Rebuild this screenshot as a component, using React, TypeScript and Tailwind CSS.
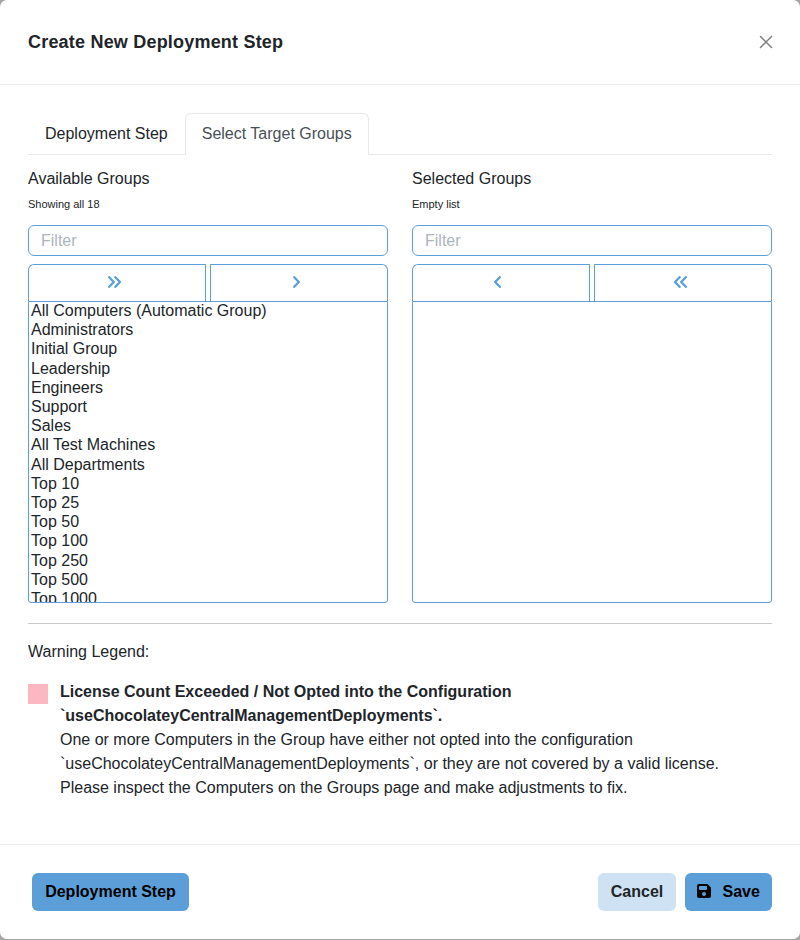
import { FaFloppyDisk } from "react-icons/fa6";

const groups = [
  "All Computers (Automatic Group)",
  "Administrators",
  "Initial Group",
  "Leadership",
  "Engineers",
  "Support",
  "Sales",
  "All Test Machines",
  "All Departments",
  "Top 10",
  "Top 25",
  "Top 50",
  "Top 100",
  "Top 250",
  "Top 500",
  "Top 1000",
];

function Chevron({ double = false, left = false }: { double?: boolean; left?: boolean }) {
  return (
    <svg
      className={`${double ? "w-3.5" : "w-[7px]"} ${left ? "-scale-x-100" : ""} h-3`}
      viewBox={double ? "0 0 14 12" : "0 0 7 12"}
      fill="none"
      stroke="currentColor"
      strokeWidth="2.3"
      strokeLinecap="round"
      strokeLinejoin="round"
    >
      <path d="M1.2 1.2L5.8 6L1.2 10.8" />
      {double && <path d="M7.4 1.2L12 6L7.4 10.8" />}
    </svg>
  );
}

type GroupListProps = {
  title: string;
  info: string;
  items: string[];
  selected?: boolean;
};

function GroupList({ title, info, items, selected = false }: GroupListProps) {
  return (
    <section className="flex w-[360px] flex-col">
      <label className="leading-6">{title}</label>
      <span className="mt-[5px] text-[11px] leading-4">{info}</span>
      <input
        placeholder="Filter"
        className="mt-[13px] h-[31px] rounded-md border border-[#5c9fd8] px-3 leading-5 outline-none placeholder:text-[#adb5bd]"
      />
      <div className="mt-2 grid h-[37px] grid-cols-2 gap-1 text-[#5c9fd8]">
        <button
          className={`flex items-center justify-center rounded-tl-md border border-b-0 border-[#5c9fd8] pb-0.5 ${selected ? "pr-[7px]" : "pr-1"}`}
        >
          <Chevron double={!selected} left={selected} />
        </button>
        <button
          className={`flex items-center justify-center rounded-tr-md border border-b-0 border-[#5c9fd8] pb-0.5 ${selected ? "pr-1.5" : "pr-[5px]"}`}
        >
          <Chevron double={selected} left={selected} />
        </button>
      </div>
      <ul className="h-[302px] overflow-hidden rounded-b-[3px] border border-[#5c9fd8] px-0.5 leading-[19.2px] text-[#212529]">
        {items.map((item) => (
          <li key={item} className="first:-mt-px">{item}</li>
        ))}
      </ul>
    </section>
  );
}

export default function App() {
  return (
    <div className="h-[940px] w-[800px] bg-[#a6a6a6] font-['Liberation_Sans',Arial,sans-serif] text-base text-[#212529]">
      <div className="flex h-[939px] flex-col rounded-[7px] bg-white">
        <header className="flex h-[85px] items-center justify-between border-b border-[#e9ecef] pl-7 pr-[27px]">
          <h5 className="text-[18px] font-bold leading-6 tracking-[0.2px]">Create New Deployment Step</h5>
          <button aria-label="Close">
            <svg className="size-3.5" viewBox="0 0 14 14" fill="none" stroke="#7f7f7f" strokeWidth="1.5" strokeLinecap="round">
              <path d="M1.5 1.5l11 11M12.5 1.5l-11 11" />
            </svg>
          </button>
        </header>
        <main className="flex-1 px-7 pt-7">
          <nav className="flex h-[42px] border-b border-[#e6e8ea]">
            <button className="h-[41px] border border-transparent px-4 leading-6">Deployment Step</button>
            <button className="h-[42px] rounded-t-md border border-[#e6e8ea] border-b-white bg-white px-4 pb-px leading-6 text-[#495057]">
              Select Target Groups
            </button>
          </nav>
          <div className="flex gap-6 pt-3">
            <GroupList title="Available Groups" info="Showing all 18" items={groups} />
            <GroupList title="Selected Groups" info="Empty list" items={[]} selected />
          </div>
          <hr className="mt-5 border-[#c8c9ca]" />
          <p className="mt-4 leading-6">Warning Legend:</p>
          <div className="mt-4 flex gap-3">
            <span className="mt-1 size-5 shrink-0 bg-[#fbb7c2]" />
            <p className="leading-6">
              <strong className="font-bold">
                License Count Exceeded / Not Opted into the Configuration
                <br />
                `useChocolateyCentralManagementDeployments`.
              </strong>
              <br />
              One or more Computers in the Group have either not opted into the configuration
              <br />
              `useChocolateyCentralManagementDeployments`, or they are not covered by a valid license.
              <br />
              Please inspect the Computers on the Groups page and make adjustments to fix.
            </p>
          </div>
        </main>
        <footer className="flex h-[95px] items-center border-t border-[#e9ecef] pl-8 pr-7 font-bold">
          <button className="h-[38px] w-[157px] rounded-md bg-[#5c9fd8] text-black">Deployment Step</button>
          <button className="ml-auto h-[38px] w-[78px] rounded-md bg-[#cfe2f3]">Cancel</button>
          <button className="ml-[9px] flex h-[38px] w-[87px] items-center rounded-md bg-[#5c9fd8] pl-3 text-black">
            <FaFloppyDisk className="mb-0.5 h-4 w-3.5" />
            <span className="ml-[11.5px]">Save</span>
          </button>
        </footer>
      </div>
    </div>
  );
}
